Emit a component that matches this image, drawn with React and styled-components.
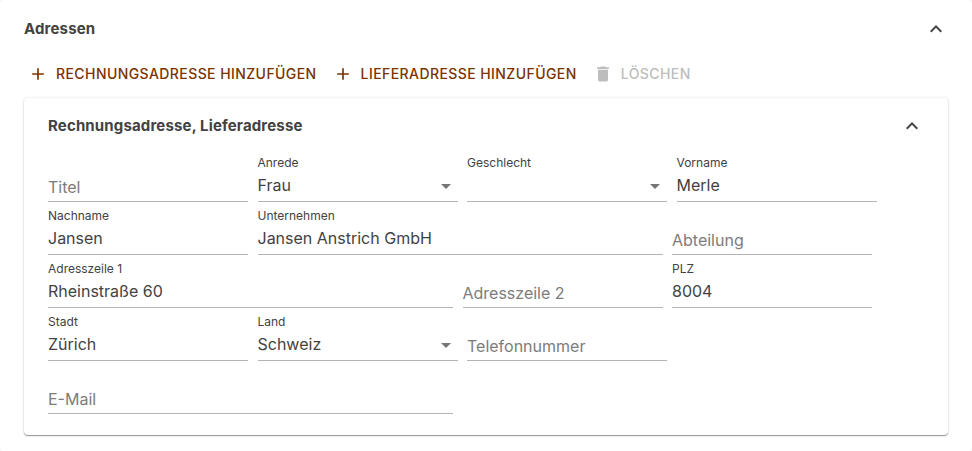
import React, { useId, useState } from "react";
import styled, { createGlobalStyle } from "styled-components";

const GlobalStyle = createGlobalStyle`
  *, *::before, *::after { box-sizing: border-box; }
  body {
    margin: 0;
    background: #f5f5f5;
    color: #424242;
    font-family: Inter, "Liberation Sans", sans-serif;
    font-size: 16px;
  }
`;

const Panel = styled.section`
  padding: 1px 24px 16px;
  border-radius: 4px;
  background: #fff;
`;

const Card = styled.section`
  padding: 0 24px 16px;
  border-radius: 4px;
  background: #fff;
  box-shadow: 0 1px 1px rgba(0, 0, 0, 0.4), 0 0 3px rgba(0, 0, 0, 0.12);
`;

const Header = styled.header`
  display: flex;
  align-items: center;
  justify-content: space-between;
  height: 56px;
`;

const Title = styled.h2`
  margin: 0;
  font-size: 15px;
  line-height: 24px;
  font-weight: 700;
  letter-spacing: 0.01em;
`;

const IconButton = styled.button`
  display: flex;
  padding: 0;
  border: 0;
  background: none;
  color: inherit;
  cursor: pointer;
`;

const Toolbar = styled.div`
  display: flex;
  flex-wrap: wrap;
  gap: 4px;
  margin-bottom: 8px;
`;

const ActionButton = styled.button`
  display: flex;
  align-items: center;
  gap: 8px;
  padding: 6px 8px 6px 4px;
  border: 0;
  border-radius: 4px;
  background: none;
  color: #7a3300;
  font: inherit;
  font-size: 14px;
  line-height: 21px;
  font-weight: 500;
  letter-spacing: 0.03em;
  text-transform: uppercase;
  cursor: pointer;

  &:disabled {
    color: #bdbdbd;
    cursor: default;
  }
`;

const Icon = styled.svg`
  display: block;
  flex: none;
  width: ${({ $size }) => $size}px;
  height: ${({ $size }) => $size}px;
  fill: currentColor;
`;

const Fields = styled.form`
  line-height: 0;
`;

const Field = styled.div`
  display: inline-block;
  position: relative;
  width: ${({ $wide }) => ($wide ? 405 : 200)}px;
  max-width: 100%;
  margin: 0 5px 5px 0;
  padding-top: 16px;
  vertical-align: top;
`;

const Label = styled.label`
  position: absolute;
  left: 0;
  top: ${({ $floating }) => ($floating ? 1 : 23)}px;
  color: ${({ $floating }) => ($floating ? "#424242" : "#7c7c7c")};
  font-size: ${({ $floating }) => ($floating ? 12 : 16)}px;
  line-height: ${({ $floating }) => ($floating ? 16 : 20)}px;
  pointer-events: none;
`;

const Input = styled.input`
  display: block;
  width: 100%;
  height: 32px;
  padding: 0 0 1px;
  border: 0;
  border-bottom: 1px solid #b3b3b3;
  border-radius: 0;
  outline: 0;
  background: transparent;
  color: inherit;
  font: inherit;
  line-height: 24px;
`;

const Select = styled(Input).attrs({ as: "select" })`
  appearance: none;
  padding-right: 24px;
`;

const Arrow = styled(Icon)`
  position: absolute;
  right: 0;
  top: 20px;
  color: #757575;
  pointer-events: none;
`;

const paths = {
  plus: "M19 13h-6v6h-2v-6H5v-2h6V5h2v6h6v2z",
  trash: "M6 19c0 1.1.9 2 2 2h8c1.1 0 2-.9 2-2V7H6v12zM19 4h-3.5l-1-1h-5l-1 1H5v2h14V4z",
  collapse: "M12 8l-6 6 1.41 1.41L12 10.83l4.59 4.58L18 14z",
  dropdown: "M7 10l5 5 5-5z",
};

function Glyph({ name, size = 20, as: Component = Icon }) {
  return (
    <Component $size={size} viewBox="0 0 24 24" aria-hidden="true">
      <path d={paths[name]} />
    </Component>
  );
}

function SectionHeader({ title }) {
  return (
    <Header>
      <Title>{title}</Title>
      <IconButton type="button" aria-label={`${title} einklappen`}>
        <Glyph name="collapse" size={24} />
      </IconButton>
    </Header>
  );
}

function AddressField({ label, initial = "", wide, options }) {
  const id = useId();
  const [value, setValue] = useState(initial);
  const control = { id, value, onChange: (event) => setValue(event.target.value) };
  return (
    <Field $wide={wide}>
      <Label htmlFor={id} $floating={Boolean(options || value)}>{label}</Label>
      {options ? (
        <>
          <Select {...control}>
            {options.map((option) => <option key={option}>{option}</option>)}
          </Select>
          <Glyph name="dropdown" size={24} as={Arrow} />
        </>
      ) : (
        <Input {...control} />
      )}
    </Field>
  );
}

const fields = [
  { label: "Titel" },
  { label: "Anrede", initial: "Frau", options: ["Frau"] },
  { label: "Geschlecht", options: [""] },
  { label: "Vorname", initial: "Merle" },
  { label: "Nachname", initial: "Jansen" },
  { label: "Unternehmen", initial: "Jansen Anstrich GmbH", wide: true },
  { label: "Abteilung" },
  { label: "Adresszeile 1", initial: "Rheinstraße 60", wide: true },
  { label: "Adresszeile 2" },
  { label: "PLZ", initial: "8004" },
  { label: "Stadt", initial: "Zürich" },
  { label: "Land", initial: "Schweiz", options: ["Schweiz"] },
  { label: "Telefonnummer" },
  { label: "E-Mail", wide: true },
];

export default function App() {
  return (
    <>
      <GlobalStyle />
      <Panel>
        <SectionHeader title="Adressen" />
        <Toolbar>
          <ActionButton type="button"><Glyph name="plus" />Rechnungsadresse hinzufügen</ActionButton>
          <ActionButton type="button"><Glyph name="plus" />Lieferadresse hinzufügen</ActionButton>
          <ActionButton type="button" disabled><Glyph name="trash" />Löschen</ActionButton>
        </Toolbar>
        <Card>
          <SectionHeader title="Rechnungsadresse, Lieferadresse" />
          <Fields>
            {fields.map((field) => (
              <React.Fragment key={field.label}>
                <AddressField {...field} />{" "}
              </React.Fragment>
            ))}
          </Fields>
        </Card>
      </Panel>
    </>
  );
}
